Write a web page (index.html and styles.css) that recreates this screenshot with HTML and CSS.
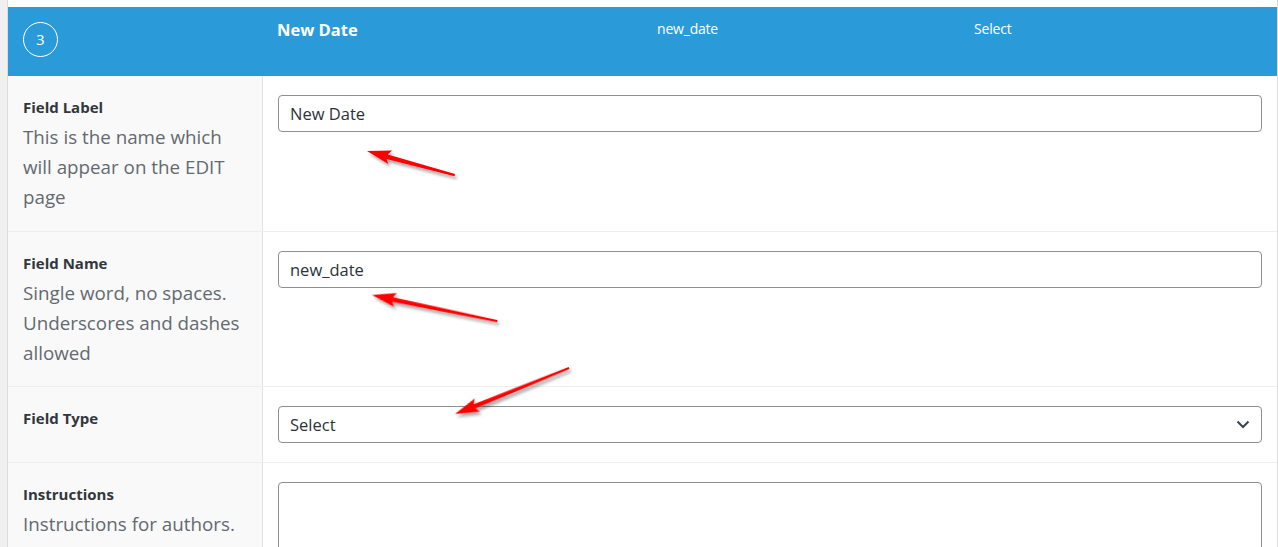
FILE: index.html
```html
<!DOCTYPE html>
<html>
<head>
<meta charset="utf-8">
<link rel="stylesheet" href="styles.css">
</head>
<body>
<div class="page">
  <div class="gutter"></div>
  <div class="main">
    <div class="topgap"></div>
    <div class="field-head">
      <div class="order"><span>3</span></div>
      <div class="h-label">New Date</div>
      <div class="h-name">new_date</div>
      <div class="h-type">Select</div>
    </div>
    <div class="row">
      <div class="cell-label">
        <div class="lbl">Field Label</div>
        <div class="desc">This is the name which will appear on the EDIT page</div>
      </div>
      <div class="cell-input">
        <div class="input">New Date</div>
      </div>
    </div>
    <div class="row">
      <div class="cell-label">
        <div class="lbl">Field Name</div>
        <div class="desc">Single word, no spaces. Underscores and dashes allowed</div>
      </div>
      <div class="cell-input">
        <div class="input">new_date</div>
      </div>
    </div>
    <div class="row">
      <div class="cell-label">
        <div class="lbl">Field Type</div>
      </div>
      <div class="cell-input">
        <div class="input select"><span>Select</span>
          <svg class="chev" width="14" height="9" viewBox="0 0 14 9"><path d="M1.5 1.5 L7 7 L12.5 1.5" fill="none" stroke="#3c434a" stroke-width="2"/></svg>
        </div>
      </div>
    </div>
    <div class="row">
      <div class="cell-label">
        <div class="lbl">Instructions</div>
        <div class="desc">Instructions for authors.</div>
      </div>
      <div class="cell-input">
        <div class="input textarea"></div>
      </div>
    </div>
  </div>
</div>
<svg class="arrows" width="1278" height="547" viewBox="0 0 1278 547">
  <defs>
    <filter id="sh" x="-20%" y="-50%" width="140%" height="200%">
      <feDropShadow dx="2" dy="3" stdDeviation="1.5" flood-color="#000" flood-opacity="0.35"/>
    </filter>
  </defs>
  <g filter="url(#sh)" fill="#ff0000">
    <g transform="translate(367 151) rotate(15.3)">
      <path d="M0 0 L24 -7 L21 -2 L91 -1 L91 1.2 L21 2.5 L24 7 Z"/>
    </g>
    <g transform="translate(372 295) rotate(11.75)">
      <path d="M0 0 L24 -7 L21 -2 L128 -1 L128 1.2 L21 2.5 L24 7 Z"/>
    </g>
    <g transform="translate(455 414) rotate(-22)">
      <path d="M0 0 L24 -7 L21 -2 L123 -1 L123 1.2 L21 2.5 L24 7 Z"/>
    </g>
  </g>
</svg>
</body>
</html>
```
FILE: styles.css
```css
html, body {
  margin: 0;
  padding: 0;
}
body {
  width: 1278px;
  height: 547px;
  overflow: hidden;
  position: relative;
  background: #f0f0f1;
  font-family: "Open Sans", "Segoe UI", sans-serif;
}
.page {
  display: flex;
  height: 547px;
}
.gutter {
  width: 7px;
  background: #f0f0f1;
  border-right: 1px solid #dcdcde;
  flex: none;
}
.main {
  width: 1269px;
  flex: none;
  background: #fff;
  border-right: 1px solid #dcdcde;
  display: flex;
  flex-direction: column;
  overflow: hidden;
}
.topgap {
  height: 7px;
  flex: none;
  background: #fff;
}
.field-head {
  height: 69px;
  flex: none;
  background: #2a9bd8;
  color: #fff;
  display: flex;
  align-items: flex-start;
}
.order {
  width: 33px;
  height: 33px;
  border: 1px solid #fff;
  border-radius: 50%;
  margin: 15px 0 0 15px;
  display: flex;
  align-items: center;
  justify-content: center;
  font-size: 14.5px;
  flex: none;
}
.h-label {
  margin: 11px 0 0 219px;
  font-size: 16.5px;
  font-weight: 700;
  width: 380px;
  line-height: 24px;
}
.h-name {
  margin-top: 12px;
  font-size: 14px;
  line-height: 20px;
  width: 317px;
  letter-spacing: -0.2px;
}
.h-type {
  margin-top: 12px;
  font-size: 14px;
  line-height: 20px;
  letter-spacing: -0.2px;
}
.row {
  display: flex;
  flex: none;
  border-top: 1px solid #eeeeee;
}
.field-head + .row {
  border-top: none;
}
.cell-label {
  flex: none;
  box-sizing: border-box;
  width: 255px;
  background: #f9f9f9;
  border-right: 1px solid #e1e1e1;
  padding: 16px 0 19px 15px;
}
.row + .row .cell-label {
  padding-bottom: 18px;
}
.lbl {
  font-size: 15px;
  font-weight: 700;
  color: #32373c;
  line-height: 30px;
}
.desc {
  font-size: 18.8px;
  color: #646970;
  line-height: 30px;
  width: 226px;
}
.cell-input {
  flex: 1;
  padding: 19px 15px 19px 15px;
}
.input {
  border: 1px solid #8c8f94;
  border-radius: 4px;
  box-sizing: border-box;
  height: 37px;
  padding: 0 11px;
  display: flex;
  align-items: center;
  font-size: 16.5px;
  color: #2c3338;
}
.select {
  justify-content: space-between;
  padding-right: 11px;
}
.textarea {
  height: 100px;
}
.arrows {
  position: absolute;
  left: 0;
  top: 0;
  pointer-events: none;
}
```
